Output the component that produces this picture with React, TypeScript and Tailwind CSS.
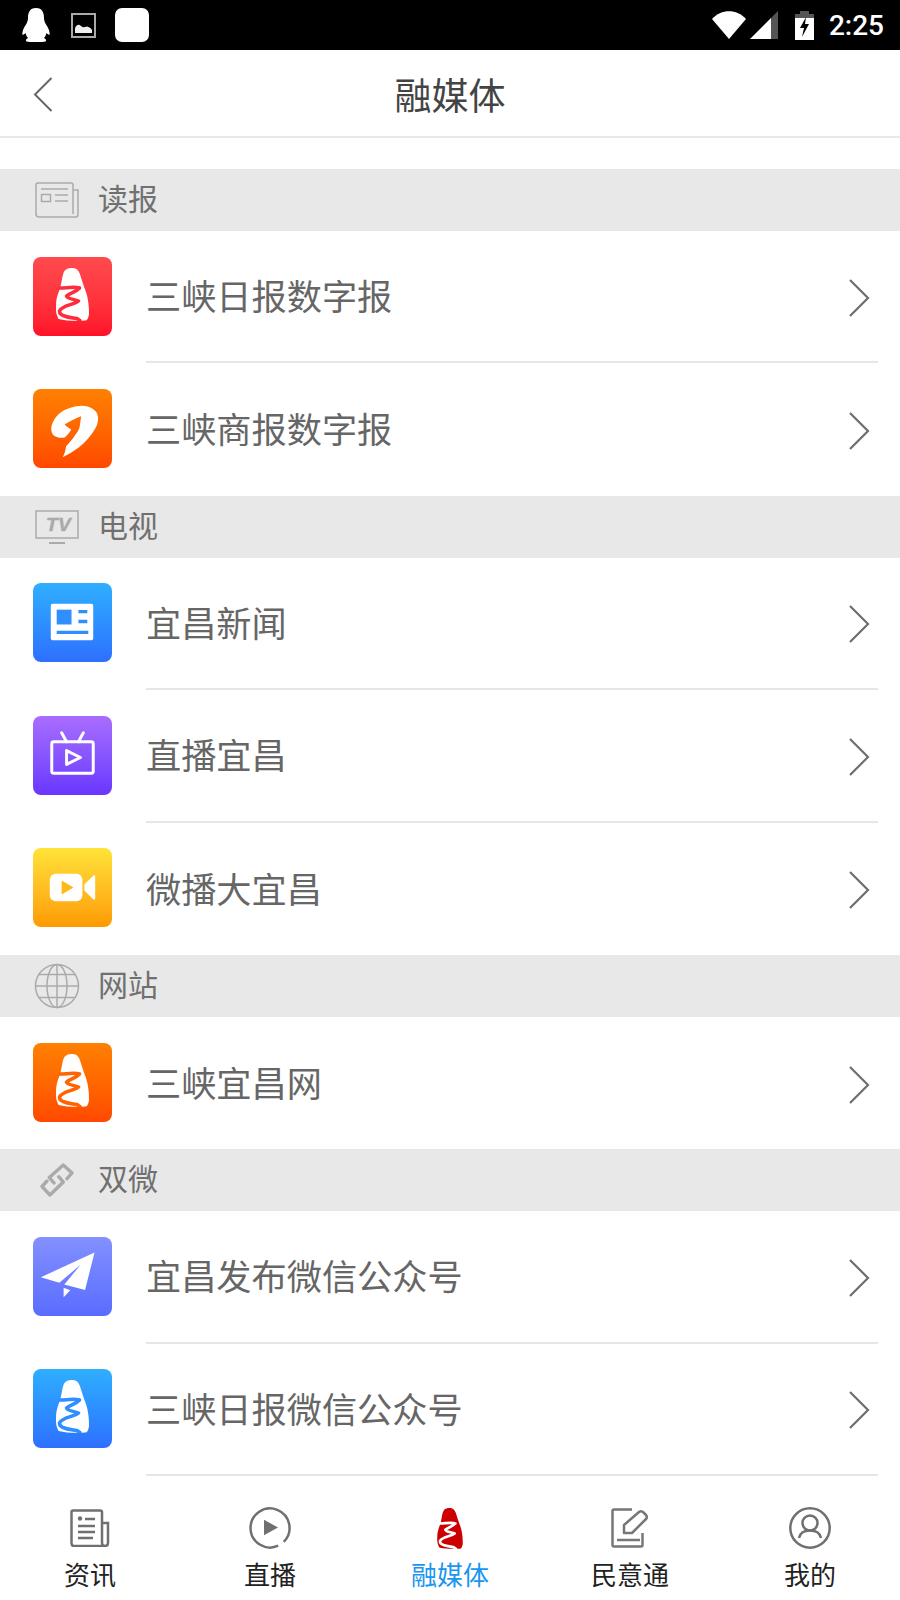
const CJK = "font-['Noto_Sans_CJK_SC','Noto_Sans',sans-serif]";

const Logo = ({ fill, cut, className }: { fill: string; cut: string; className: string }) => (
  <svg viewBox="0 0 33 53" className={className}>
    <path
      d="M15.400 0C18 0 20 0.500 21 1.500C23 3.500 24 6 24.600 8.200C25.800 12 27 16 28.300 19.400C30 24 31.500 28 32 32.500C32.800 37 33 41 33 45.500C33 48 32 50.500 30.800 52.200C24 53.300 10 53 2.600 51C1 48 0 45 0 41.800C0 37 0 34 0.700 30.600C1.500 27 2.800 24 3.700 21.300C5 17 5.500 14 6.200 10C6.800 7 7.500 4.500 8.800 2.600C10.500 0.800 13 0 15.400 0Z"
      fill={fill}
    />
    <path
      d="M2 20C9 20.500 17 18 23.500 20C20 24 14 25 10.500 28C11 31 18 31 22.500 33C18 37 6 37 3.500 43C3 48 13 49.500 21 50.500L25 53.500"
      fill="none"
      stroke={cut}
      strokeWidth="3.500"
      strokeLinejoin="round"
    />
  </svg>
);

const Tile = ({ from, to, children }: { from: string; to: string; children: React.ReactNode }) => (
  <div className={`w-[79px] h-[79px] mt-[-2px] shrink-0 rounded-lg bg-gradient-to-b flex items-center justify-center ${from} ${to}`}>
    {children}
  </div>
);

const Chevron = () => (
  <svg width="22" height="40" viewBox="0 0 22 40" fill="none" stroke="#6e6e6e" strokeWidth="2.200" className="shrink-0">
    <path d="M2 2L20 20L2 38" />
  </svg>
);

const Row = ({ icon, label, line = true }: { icon: React.ReactNode; label: string; line?: boolean }) => (
  <div className="h-[132.4px] flex items-center pl-[33px] pr-[22px]">
    {icon}
    <div
      className={`flex-1 h-full ml-[34px] flex items-center justify-between pb-[2px] ${line ? "border-b-2 border-[#e6e6e6]" : ""}`}
    >
      <span className="text-[35.2px] leading-none text-[#666] mt-[-1px]">{label}</span>
      <div className="mr-[8px] mt-[5px]">
        <Chevron />
      </div>
    </div>
  </div>
);

const Section = ({ icon, label }: { icon: React.ReactNode; label: string }) => (
  <div className="h-[62px] bg-[#e8e8e8] flex items-center">
    <div className="w-[98px] flex justify-center pl-[16px]">{icon}</div>
    <span className="text-[30px] leading-none text-[#707070] mt-[-6px]">{label}</span>
  </div>
);

const NavItem = ({ icon, label, active }: { icon: React.ReactNode; label: string; active?: boolean }) => (
  <div className="flex-1 flex flex-col items-center pt-[16px]">
    <div className="h-[44px] flex items-center justify-center">{icon}</div>
    <span className={`mt-[7px] text-[26px] leading-[34px] ${active ? "text-[#1a96f0]" : "text-[#222]"}`}>{label}</span>
  </div>
);

export default function App() {
  return (
    <div className={`w-[900px] h-[1600px] bg-white flex flex-col overflow-hidden ${CJK}`}>
      {/* Status bar */}
      <div className="h-[50px] shrink-0 bg-black flex items-center pl-[22px] pr-[16px]">
        <svg width="28" height="34" viewBox="0 0 28 34" fill="#fff">
          <path d="M14 0C7.500 0 6 5 6 10C6 13 5 15 3 18C1 21 0 25 0.500 27C2 26.500 3 25.500 3.500 25C4 27 5 29 6 30C4.500 31 3 32 4.500 33.500C9 34.500 19 34.500 23.500 33.500C25 32 23.500 31 22 30C23 29 24 27 24.500 25C25 25.500 26 26.500 27.500 27C28 25 27 21 25 18C23 15 22 13 22 10C22 5 20.500 0 14 0Z" />
        </svg>
        <svg width="25" height="25" viewBox="0 0 25 25" className="ml-[21px]">
          <rect x="1" y="1" width="23" height="23" fill="none" stroke="#aaa" strokeWidth="2" />
          <path d="M4 20V15C6 11 8 11 10 13C12 15 14 14 16 13.500C18 14 20 15 21 17V20Z" fill="#eee" />
        </svg>
        <div className="w-[34px] h-[34px] ml-[19px] rounded-[7px] bg-white" />
        <div className="flex-1" />
        <svg width="34" height="28" viewBox="0 0 34 28" fill="#fff">
          <path d="M0 8C9 -2.500 25 -2.500 34 8L17 28Z" />
        </svg>
        <svg width="28" height="28" viewBox="0 0 28 28" className="ml-[4px]">
          <path d="M0 28L21 7V28Z" fill="#fff" />
          <path d="M21 7L28 0V28H21Z" fill="#555" />
        </svg>
        <svg width="19" height="29" viewBox="0 0 19 29" className="ml-[17px]">
          <path d="M5 0H14V3H19V7H0V3H5Z" fill="#555" />
          <path d="M0 7H19V29H0Z" fill="#fff" />
          <path d="M11 6L5 17H9L7 26L14 13H10Z" fill="#000" />
        </svg>
        <span className="ml-[15px] font-['Roboto',sans-serif] text-[28px] leading-none font-medium text-white mt-[1px]">2:25</span>
      </div>

      {/* Header */}
      <div className="h-[88px] shrink-0 border-b-2 border-[#e8e8e8] relative flex items-center justify-center">
        <svg width="20" height="35" viewBox="0 0 20 35" fill="none" stroke="#666" strokeWidth="2" className="absolute left-[33px] top-[27px]">
          <path d="M18.500 1L2 17.500L18.500 34" />
        </svg>
        <span className="text-[37px] leading-none text-[#444] mt-[3px]">融媒体</span>
      </div>

      {/* List */}
      <div className="flex-1 min-h-0 overflow-hidden pt-[31px]">
        <Section
          label="读报"
          icon={
            <svg width="44" height="36" viewBox="0 0 44 36" fill="none" stroke="#aaa" strokeWidth="1.500">
              <path d="M38 32V3C38 1.500 37 1 36 1H3C1.500 1 1 2 1 3V32C1 33.500 2 35 4 35H41C42.500 35 43 34 43 32V8H38" />
              <rect x="6.500" y="12.500" width="9" height="7" />
              <path d="M6 7H33M20 13H33M20 19H33" />
            </svg>
          }
        />
        <Row
          label="三峡日报数字报"
          icon={
            <Tile from="from-[#ff4a4e]" to="to-[#ff1029]">
              <Logo fill="#fff" cut="#ff2c3c" className="w-[33px] h-[53px] mb-[4px]" />
            </Tile>
          }
        />
        <Row
          label="三峡商报数字报"
          line={false}
          icon={
            <Tile from="from-[#ff8000]" to="to-[#ff4800]">
              <svg width="79" height="79" viewBox="0 0 80 80">
                <path
                  d="M30 69C32 66 33 62 33.500 58C36 55 40 51 42 47.500C45 44 47 41 47.500 37C48 33 48.500 30 48.700 27.700C43 30 37 33 32 36C34 38 36.500 40 38.700 41C37 44 35 47 32 49C28 50 23 49 20 46C18 43 18 38 20 34C23 27 29 22 35 20C40 18 45 17 50 17C56 17 62 20 64.500 24C67 29 66 35 63 40C59 47 53 54 46 59.500C41 63 36 66 30 69Z"
                  fill="#fff"
                />
              </svg>
            </Tile>
          }
        />

        <Section
          label="电视"
          icon={
            <svg width="44" height="34" viewBox="0 0 44 34" fill="none" stroke="#aaa" strokeWidth="1.500">
              <rect x="1" y="1" width="42" height="27" />
              <path d="M14 33H30" strokeWidth="2" />
              <text x="11" y="21" fontFamily="Liberation Sans, sans-serif" fontSize="19" fontWeight="700" fontStyle="italic" letterSpacing="0.500" fill="#aaa" stroke="#aaa" strokeWidth="0.500">
                TV
              </text>
            </svg>
          }
        />
        <Row
          label="宜昌新闻"
          icon={
            <Tile from="from-[#30aeff]" to="to-[#2f6fff]">
              <svg width="79" height="79" viewBox="0 0 80 80">
                <rect x="18" y="21" width="43" height="37" rx="2" fill="#fff" />
                <rect x="24" y="27" width="15" height="15" fill="#2f8fff" />
                <path d="M46 29H55M46 39H55M24 50H56" stroke="#2f8fff" strokeWidth="3.500" />
              </svg>
            </Tile>
          }
        />
        <Row
          label="直播宜昌"
          icon={
            <Tile from="from-[#a96cff]" to="to-[#6a35ff]">
              <svg width="79" height="79" viewBox="0 0 80 80" fill="none" stroke="#fff" strokeWidth="3" strokeLinejoin="round" strokeLinecap="round">
                <rect x="19" y="26" width="42" height="32" rx="2" />
                <path d="M29 17L34 26M51 17L46 26" />
                <path d="M34 35L48 42L34 49Z" />
              </svg>
            </Tile>
          }
        />
        <Row
          label="微播大宜昌"
          line={false}
          icon={
            <Tile from="from-[#ffe338]" to="to-[#ff9a00]">
              <svg width="79" height="79" viewBox="0 0 80 80">
                <rect x="17" y="26" width="33" height="28" rx="6" fill="#fff" />
                <path d="M29 33L41 40L29 47Z" fill="#ffb818" />
                <path d="M52 37L61 28C62 27 63 28 63 29V51C63 52 62 53 61 52L52 43Z" fill="#fff" />
              </svg>
            </Tile>
          }
        />

        <Section
          label="网站"
          icon={
            <svg width="46" height="46" viewBox="0 0 46 46" fill="none" stroke="#aaa" strokeWidth="1.500">
              <circle cx="23" cy="23" r="21.500" />
              <ellipse cx="23" cy="23" rx="10" ry="21.500" />
              <path d="M23 1.500V44.500M1.500 23H44.500M5 11.500H41M5 34.500H41" />
            </svg>
          }
        />
        <Row
          label="三峡宜昌网"
          line={false}
          icon={
            <Tile from="from-[#ff8000]" to="to-[#ff4800]">
              <Logo fill="#fff" cut="#ff6400" className="w-[33px] h-[53px] mb-[4px]" />
            </Tile>
          }
        />

        <Section
          label="双微"
          icon={
            <svg width="34" height="34" viewBox="0 0 34 34" fill="none" stroke="#aaa" strokeWidth="3.400" strokeLinejoin="round" strokeLinecap="round">
              <path d="M27 15.700L32 10L23.300 2L9.300 14.400L14 20" />
              <path d="M7 18L2 23.500L10 32L23.300 19L18.700 13.700" />
            </svg>
          }
        />
        <Row
          label="宜昌发布微信公众号"
          icon={
            <Tile from="from-[#8390ff]" to="to-[#5a6cff]">
              <svg width="79" height="79" viewBox="0 0 80 80" fill="#fff">
                <path d="M62.300 15.700L8 40.700L26.700 46.300L48.300 28L31.700 48L52.700 53.700Z" />
                <path d="M31 51.300L37.700 54L31 61Z" />
              </svg>
            </Tile>
          }
        />
        <Row
          label="三峡日报微信公众号"
          icon={
            <Tile from="from-[#30aeff]" to="to-[#2f6fff]">
              <Logo fill="#fff" cut="#2f8fff" className="w-[33px] h-[53px] mb-[4px]" />
            </Tile>
          }
        />
      </div>

      {/* Bottom nav */}
      <div className="h-[110px] shrink-0 bg-white flex">
        <NavItem
          label="资讯"
          icon={
            <svg width="40" height="38" viewBox="0 0 40 38" fill="none" stroke="#707070" strokeWidth="2.500">
              <path d="M32 14H38V34C38 36 36.500 37 35 37H4C2 37 1.500 36 1.500 34V3C1.500 2 2 1.500 3 1.500H30C31 1.500 32 2 32 3V34C32 36 33.500 37 35 37" />
              <circle cx="10" cy="9.500" r="2.200" fill="#707070" stroke="none" />
              <path d="M15 10H25M8 17H25M8 23H25M8 29H23" />
            </svg>
          }
        />
        <NavItem
          label="直播"
          icon={
            <svg width="42" height="42" viewBox="0 0 42 42" fill="none" stroke="#707070" strokeWidth="2.500">
              <path d="M29.200 38.700A19.500 19.500 0 1 1 34.800 34.800" />
              <path d="M15 12.700L29 20.500L15 28.300Z" fill="#707070" stroke="none" />
            </svg>
          }
        />
        <NavItem
          active
          label="融媒体"
          icon={<Logo fill="#cc0000" cut="#fff" className="w-[26px] h-[41px]" />}
        />
        <NavItem
          label="民意通"
          icon={
            <svg width="38" height="40" viewBox="0 0 38 40" fill="none" stroke="#777" strokeWidth="2.500" strokeLinejoin="round">
              <path d="M21 1.500H3C2 1.500 1.500 2 1.500 3V37C1.500 38 2 38.500 3 38.500H30C31 38.500 31.500 38 31.500 37V25" />
              <path d="M13 25V17L28 4C29.500 3 31 3 32.500 4.500L35 7C36 8.500 36 10 35 11L21 25Z" />
              <path d="M6 32H29" />
            </svg>
          }
        />
        <NavItem
          label="我的"
          icon={
            <svg width="42" height="42" viewBox="0 0 42 42" fill="none" stroke="#707070" strokeWidth="2.500">
              <circle cx="21" cy="21" r="19.700" />
              <circle cx="21" cy="16" r="7.500" />
              <path d="M10 31C11 26 15 23.500 21 23.500C27 23.500 31 26 32 31" />
            </svg>
          }
        />
      </div>
    </div>
  );
}
